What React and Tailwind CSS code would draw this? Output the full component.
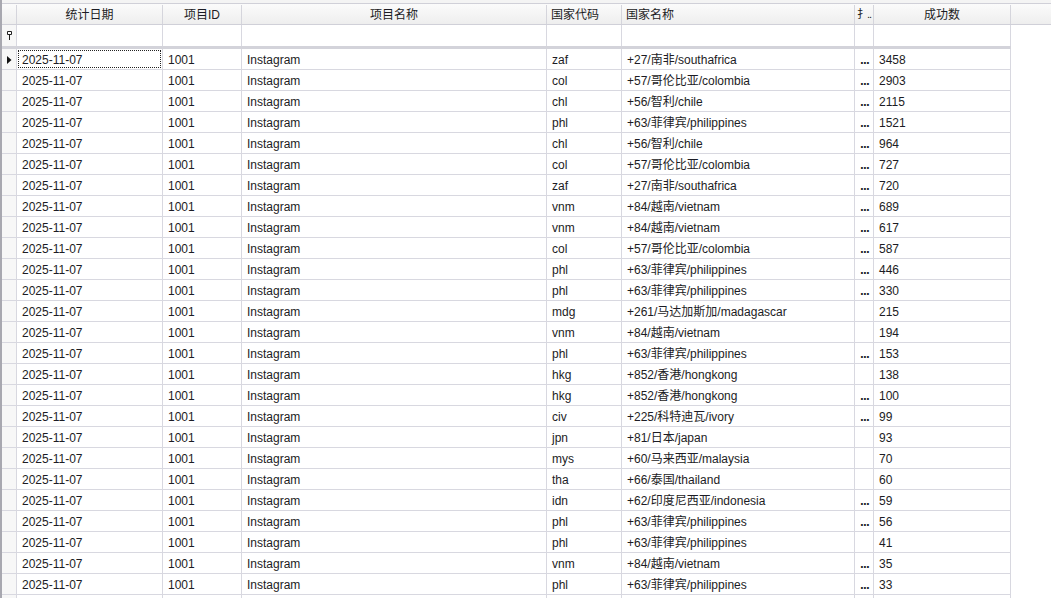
import React from 'react'

// 列宽（像素），与截图对齐
const cols = 'grid grid-cols-[15px_146px_79px_305px_75px_233px_19px_137px]'

const rows = [
  ['zaf', '+27/南非/southafrica', true, 3458],
  ['col', '+57/哥伦比亚/colombia', true, 2903],
  ['chl', '+56/智利/chile', true, 2115],
  ['phl', '+63/菲律宾/philippines', true, 1521],
  ['chl', '+56/智利/chile', true, 964],
  ['col', '+57/哥伦比亚/colombia', true, 727],
  ['zaf', '+27/南非/southafrica', true, 720],
  ['vnm', '+84/越南/vietnam', true, 689],
  ['vnm', '+84/越南/vietnam', true, 617],
  ['col', '+57/哥伦比亚/colombia', true, 587],
  ['phl', '+63/菲律宾/philippines', true, 446],
  ['phl', '+63/菲律宾/philippines', true, 330],
  ['mdg', '+261/马达加斯加/madagascar', false, 215],
  ['vnm', '+84/越南/vietnam', false, 194],
  ['phl', '+63/菲律宾/philippines', true, 153],
  ['hkg', '+852/香港/hongkong', false, 138],
  ['hkg', '+852/香港/hongkong', true, 100],
  ['civ', '+225/科特迪瓦/ivory', true, 99],
  ['jpn', '+81/日本/japan', false, 93],
  ['mys', '+60/马来西亚/malaysia', false, 70],
  ['tha', '+66/泰国/thailand', false, 60],
  ['idn', '+62/印度尼西亚/indonesia', true, 59],
  ['phl', '+63/菲律宾/philippines', true, 56],
  ['phl', '+63/菲律宾/philippines', false, 41],
  ['vnm', '+84/越南/vietnam', true, 35],
  ['phl', '+63/菲律宾/philippines', true, 33],
]

function HeadCell({ children, align = 'center', last }) {
  const a = align === 'center' ? 'justify-center' : 'justify-start pl-[4px]'
  return (
    <div className={`flex items-center ${a} whitespace-nowrap overflow-hidden ${last ? '' : 'border-r border-[#d5d5dc]'}`}>
      {children}
    </div>
  )
}

function Cell({ children, focus, pl = 'pl-[5px]' }) {
  return (
    <div className="relative flex items-center pt-[2px] border-r border-[#d8d8e0] whitespace-nowrap overflow-hidden">
      {focus && <div className="absolute inset-[1px] border border-dotted border-[#222]" />}
      <span className={pl}>{children}</span>
    </div>
  )
}

export default function App() {
  return (
    <div
      className="w-[1051px] h-[598px] overflow-hidden bg-white text-[12px] text-[#1c1c24] border-l-2 border-[#a8a8b0]"
      style={{ fontFamily: '"Liberation Sans", "Noto Sans CJK SC", sans-serif' }}
    >
      <div className="h-[3px] bg-[#f4f4f4]" />
      {/* 表头 */}
      <div className="flex h-[22px] pt-[1px] border-t border-[#a3a3a3] border-b border-[#d0d0d8] bg-gradient-to-b from-[#fbfbfb] to-[#eeeeee]">
        <div className={`${cols} shrink-0`}>
          <HeadCell />
          <HeadCell>统计日期</HeadCell>
          <HeadCell>项目ID</HeadCell>
          <HeadCell>项目名称</HeadCell>
          <HeadCell align="left">国家代码</HeadCell>
          <HeadCell align="left">国家名称</HeadCell>
          <div className="flex items-center pl-[2px] border-r border-[#d5d5dc] whitespace-nowrap overflow-hidden text-[11px] tracking-[-1px]">
            扌..
          </div>
          <HeadCell>成功数</HeadCell>
        </div>
        <div className="flex-1" />
      </div>

      {/* 过滤行 */}
      <div className={`${cols} w-[1009px] h-[24px] border-b-[3px] border-[#d3d3da]`}>
        <div className="flex items-center justify-center border-r border-[#d8d8e0] bg-[#f7f7f7]">
          <svg width="7" height="9" viewBox="0 0 7 9">
            <rect x="1" y="0" width="5" height="4" rx="1" fill="#222" />
            <rect x="2" y="1" width="3" height="2" fill="#fff" />
            <rect x="3" y="4" width="1" height="5" fill="#222" />
          </svg>
        </div>
        <Cell />
        <Cell />
        <Cell />
        <Cell />
        <Cell />
        <Cell />
        <Cell />
      </div>

      {/* 数据行 */}
      {rows.map(([code, country, more, count], i) => (
        <div key={i} className={`${cols} w-[1009px] h-[21px] border-b border-[#d8d8e0]`}>
          <div className="flex items-center justify-center pt-[1px] border-r border-[#d8d8e0] bg-[#f7f7f7]">
            {i === 0 && (
              <svg width="5" height="8" viewBox="0 0 5 8">
                <path d="M0 0 L4.5 4 L0 8 Z" fill="#111" />
              </svg>
            )}
          </div>
          <Cell focus={i === 0}>2025-11-07</Cell>
          <Cell>1001</Cell>
          <Cell>Instagram</Cell>
          <Cell>{code}</Cell>
          <Cell>{country}</Cell>
          <Cell pl="pl-[5px]">
            {more ? (
              <span className="font-bold text-[10px] tracking-[-0.8px]" style={{ fontFamily: '"DejaVu Sans", sans-serif' }}>...</span>
            ) : ''}
          </Cell>
          <Cell>{count}</Cell>
        </div>
      ))}
      <div className={`${cols} w-[1009px] h-[21px]`}>
        <div className="border-r border-[#d8d8e0] bg-[#f7f7f7]" />
        <Cell />
        <Cell />
        <Cell />
        <Cell />
        <Cell />
        <Cell />
        <Cell />
      </div>
    </div>
  )
}
